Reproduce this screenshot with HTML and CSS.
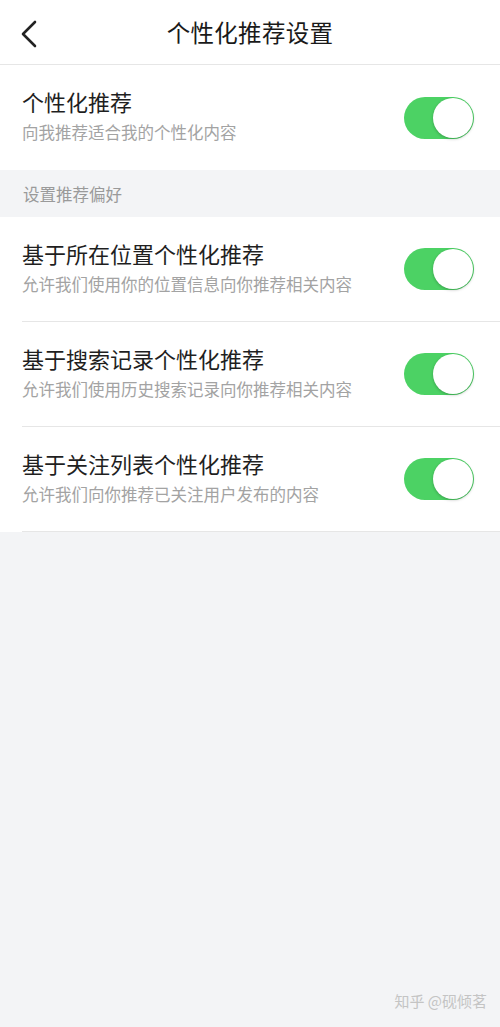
FILE: index.html
```html
<!DOCTYPE html>
<html lang="zh-CN">

<head>
    <meta charset="UTF-8">
    <meta name="viewport" content="width=device-width, initial-scale=1.0">
    <title>个性化推荐设置</title>
    <link rel="stylesheet" href="styles.css">
</head>

<body>

    <!-- Barra superior -->
    <div class="nav-bar">
        <svg class="back-icon" width="18" height="28" viewBox="0 0 18 28">
            <path d="M15 2 L3 14 L15 26" fill="none" stroke="#222" stroke-width="2.6" stroke-linecap="round" stroke-linejoin="round"/>
        </svg>
        <h1>个性化推荐设置</h1>
    </div>

    <div class="group">
        <div class="row row-last">
            <div class="row-text">
                <div class="row-title">个性化推荐</div>
                <div class="row-desc">向我推荐适合我的个性化内容</div>
            </div>
            <div class="switch on"><span class="knob"></span></div>
        </div>
    </div>

    <div class="section-label">设置推荐偏好</div>

    <div class="group">
        <div class="row">
            <div class="row-text">
                <div class="row-title">基于所在位置个性化推荐</div>
                <div class="row-desc">允许我们使用你的位置信息向你推荐相关内容</div>
            </div>
            <div class="switch on"><span class="knob"></span></div>
        </div>
        <div class="row">
            <div class="row-text">
                <div class="row-title">基于搜索记录个性化推荐</div>
                <div class="row-desc">允许我们使用历史搜索记录向你推荐相关内容</div>
            </div>
            <div class="switch on"><span class="knob"></span></div>
        </div>
        <div class="row">
            <div class="row-text">
                <div class="row-title">基于关注列表个性化推荐</div>
                <div class="row-desc">允许我们向你推荐已关注用户发布的内容</div>
            </div>
            <div class="switch on"><span class="knob"></span></div>
        </div>
    </div>

    <div class="watermark">知乎 @砚倾茗</div>

</body>

</html>
```

FILE: styles.css
```css
body {
    font-family: "Noto Sans CJK SC", "Noto Sans", sans-serif;
    margin: 0;
    padding: 0;
    background-color: #f3f4f6;
    color: #222;
    min-height: 100vh;
    position: relative;
}

.nav-bar {
    height: 64px;
    background: #fff;
    border-bottom: 1px solid #e6e6e6;
    display: flex;
    align-items: center;
    justify-content: center;
    position: relative;
}

.back-icon {
    position: absolute;
    left: 20px;
    top: 20px;
}

.nav-bar h1 {
    margin: 0;
    font-size: 23.5px;
    font-weight: 400;
    color: #1a1a1a;
    letter-spacing: 0.3px;
}

.group {
    background: #fff;
}

.row {
    margin-left: 22px;
    padding-right: 26px;
    height: 104px;
    border-bottom: 1px solid #e6e6e6;
    display: flex;
    align-items: center;
    justify-content: space-between;
}

.row-last {
    height: 105px;
    border-bottom: none;
}

.row-text {
    display: flex;
    flex-direction: column;
    gap: 7px;
    padding-bottom: 6px;
}

.row-title {
    font-size: 22px;
    line-height: 28px;
    color: #1f1f1f;
}

.row-desc {
    font-size: 16.5px;
    line-height: 20px;
    color: #a3a3a3;
}

.section-label {
    height: 47px;
    padding-left: 23px;
    display: flex;
    align-items: center;
    font-size: 16.5px;
    color: #9a9a9a;
}

.switch {
    width: 70px;
    height: 42px;
    border-radius: 21px;
    background: #4cd264;
    position: relative;
    flex-shrink: 0;
}

.knob {
    position: absolute;
    right: 1px;
    top: 1px;
    width: 40px;
    height: 40px;
    border-radius: 50%;
    background: #fff;
    box-shadow: 0 1px 3px rgba(0, 0, 0, 0.25);
}

.watermark {
    position: absolute;
    right: 13px;
    bottom: 16px;
    font-size: 15px;
    color: #c4c4c4;
}
```
